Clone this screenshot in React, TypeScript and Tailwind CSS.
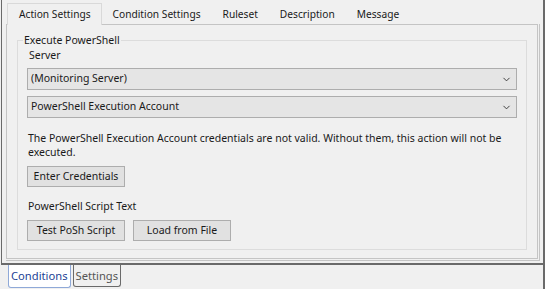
import { ChevronDown } from 'lucide-react';

const font = { fontFamily: '"Noto Sans", Lato, sans-serif' };

function Tab({ label, active }: { label: string; active?: boolean }) {
    if (active) {
        return (
            <div className="relative z-10 -mb-px h-[22px] border border-b-0 border-[#d9d9d9] bg-[#f0f0f0] pl-[11px] pr-[10px] pt-[3px] text-[10.2px] text-[#1a1a1a]">
                {label}
            </div>
        );
    }
    return <div className="h-[19px] px-[11px] pt-[2px] text-[10.2px] text-[#1a1a1a]">{label}</div>;
}

function Dropdown({ value }: { value: string }) {
    return (
        <div className="flex h-[22px] items-center justify-between border border-[#adadad] bg-[#e5e5e5] pl-[3px] pr-[4px] text-[10.5px] text-[#1a1a1a]">
            <span>{value}</span>
            <ChevronDown className="h-[11px] w-[11px] text-[#333]" strokeWidth={2} />
        </div>
    );
}

function WinButton({ label }: { label: string }) {
    return (
        <button className="h-[21px] w-[98px] whitespace-nowrap border border-[#adadad] bg-[#e1e1e1] text-[10.5px] leading-none text-[#1a1a1a]">
            {label}
        </button>
    );
}

export default function App() {
    return (
        <div className="flex h-[289px] w-[545px] flex-col border-r-2 border-[#6a6a6a] bg-[#f0f0f0]" style={font}>
            {/* Top tab control */}
            <div className="ml-px flex h-[265px] flex-col border-b-2 border-l border-[#6a6a6a] pb-[3px] pl-[4px] pr-[3px] pt-[3px]">
                <div className="flex h-[21px] items-end pl-px">
                    <Tab label="Action Settings" active />
                    <Tab label="Condition Settings" />
                    <Tab label="Ruleset" />
                    <Tab label="Description" />
                    <Tab label="Message" />
                </div>
                <div className="flex flex-1 border-b border-r border-[#c4c4c4] pb-px pr-px">
                    <div className="flex flex-1 flex-col border border-[#c4c4c4] px-[10px] pb-[8px] pt-[8px]">
                        <fieldset className="flex-1 border border-[#dcdcdc] px-[9px] pb-[8px]">
                            <legend className="-ml-[4px] px-[1px] text-[10.5px] leading-[15px] text-[#1a1a1a]">
                                Execute PowerShell
                            </legend>
                            <div className="pl-[2px] text-[10.5px] leading-[14px] text-[#1a1a1a]">Server</div>
                            <div className="mt-[6px] flex flex-col gap-[6px]">
                                <Dropdown value="(Monitoring Server)" />
                                <Dropdown value="PowerShell Execution Account" />
                            </div>
                            <p className="mt-[13px] pl-px pr-[4px] text-[10.5px] leading-[14px] text-[#1a1a1a]">
                                The PowerShell Execution Account credentials are not valid. Without them, this action will not be executed.
                            </p>
                            <div className="mt-[3px]">
                                <WinButton label="Enter Credentials" />
                            </div>
                            <div className="mt-[12px] pl-px text-[10.5px] leading-[14px] text-[#1a1a1a]">PowerShell Script Text</div>
                            <div className="mt-[7px] flex gap-[8px]">
                                <WinButton label="Test PoSh Script" />
                                <WinButton label="Load from File" />
                            </div>
                        </fieldset>
                    </div>
                </div>
            </div>

            {/* Bottom tabs */}
            <div className="flex pl-[8px]">
                <div className="h-[23px] rounded-b-[3px] border border-t-0 border-[#8fa9d8] bg-white px-[2px] pt-[3px] text-[11.2px] text-[#1c3f94]">
                    Conditions
                </div>
                <div className="ml-[2px] h-[22px] rounded-b-[3px] border border-t-0 border-[#6a6a6a] px-[2px] pt-[3px] text-[11.2px] text-[#555]">
                    Settings
                </div>
            </div>
        </div>
    );
}
